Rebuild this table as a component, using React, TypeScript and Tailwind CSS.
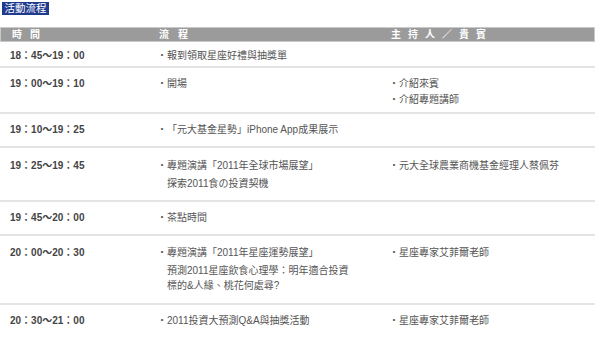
const font = "font-['Liberation_Sans','Noto_Sans_CJK_TC',sans-serif]";

type Row = {
  time: string;
  flow: string;
  sub?: string[];
  host: string[];
  pad: string;
};

const rows: Row[] = [
  { time: "18：45～19：00", flow: "報到領取星座好禮與抽獎單", host: [], pad: "pt-[6px] pb-[2px]" },
  { time: "19：00～19：10", flow: "開場", host: ["介紹來賓", "介紹專題講師"], pad: "pt-2 pb-1" },
  { time: "19：10～19：25", flow: "「元大基金星勢」iPhone App成果展示", host: [], pad: "py-2" },
  {
    time: "19：25～19：45",
    flow: "專題演講「2011年全球市場展望」",
    sub: ["探索2011食の投資契機"],
    host: ["元大全球農業商機基金經理人蔡佩芬"],
    pad: "pt-[10px] pb-[9px]",
  },
  { time: "19：45～20：00", flow: "茶點時間", host: [], pad: "py-2" },
  {
    time: "20：00～20：30",
    flow: "專題演講「2011年星座運勢展望」",
    sub: ["預測2011星座飲食心理學：明年適合投資標的&人緣、桃花何處尋?"],
    host: ["星座專家艾菲爾老師"],
    pad: "pt-[9px] pb-[10px]",
  },
  { time: "20：30～21：00", flow: "2011投資大預測Q&A與抽獎活動", host: ["星座專家艾菲爾老師"], pad: "py-2" },
];

function Bullet({ text }: { text: string }) {
  return (
    <div className="flex leading-4">
      <span className="w-[10px] shrink-0">・</span>
      <span>{text}</span>
    </div>
  );
}

export default function App() {
  return (
    <div className={`${font} bg-white w-[600px] h-[337px] overflow-hidden`}>
      {/* Title badge */}
      <div className="ml-[2px] mt-[2px] flex h-[13px] w-[47px] items-center justify-center bg-[#1f3b8d] text-[10.5px] leading-none text-white">
        活動流程
      </div>

      {/* Schedule table */}
      <div className="mt-[12px] w-[595px]">
        <div className="flex h-[15px] items-center border border-[#c9c9c9] bg-[#9b9b9b] text-[10px] font-bold leading-none text-white">
          <div className="w-[156px] pl-[11px] tracking-[8px]">時間</div>
          <div className="w-[232px] pl-[2px] tracking-[9px]">流程</div>
          <div className="flex-1 pl-[2px] tracking-[7px]">主持人／貴賓</div>
        </div>

        {rows.map((row) => (
          <div
            key={row.time}
            className={`flex border-b-2 border-[#e4e4e4] text-[10px] text-[#555] ${row.pad}`}
          >
            <div className="w-[157px] pl-[10px] font-bold leading-4 text-[#444]">{row.time}</div>
            <div className="flex w-[232px] flex-col gap-[2px]">
              <Bullet text={row.flow} />
              {row.sub?.map((s) => (
                <p key={s} className="w-[196px] pl-[10px] leading-[15px]">
                  {s}
                </p>
              ))}
            </div>
            <div className="flex flex-1 flex-col">
              {row.host.map((h) => (
                <Bullet key={h} text={h} />
              ))}
            </div>
          </div>
        ))}
      </div>
    </div>
  );
}
